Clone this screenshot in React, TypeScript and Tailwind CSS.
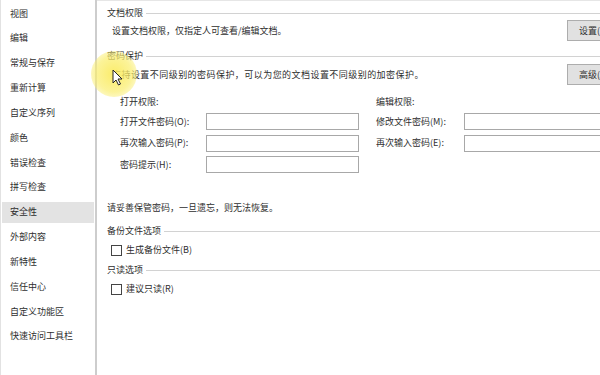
import React from "react";

const navItems = [
  "视图",
  "编辑",
  "常规与保存",
  "重新计算",
  "自定义序列",
  "颜色",
  "错误检查",
  "拼写检查",
  "安全性",
  "外部内容",
  "新特性",
  "信任中心",
  "自定义功能区",
  "快速访问工具栏",
];

function GroupTitle({ title }: { title: string }) {
  return (
    <div className="flex h-[14px] items-center gap-[3px]">
      <span className="whitespace-nowrap">{title}</span>
      <div className="h-px flex-1 bg-[#d2d2d2]" />
    </div>
  );
}

function Field({ label, wide }: { label: string; wide?: boolean }) {
  return (
    <div className="flex h-[17px] items-center">
      <span className={`${wide ? "w-[88px]" : "w-[86px]"} whitespace-nowrap`}>{label}</span>
      <div className="h-[17px] w-[153px] shrink-0 border border-[#a8a8a8] bg-white" />
    </div>
  );
}

function Check({ label }: { label: string }) {
  return (
    <div className="flex h-[14px] items-center">
      <div className="ml-[4px] h-[11px] w-[11px] border border-[#444] bg-white" />
      <span className="ml-[4px] whitespace-nowrap">{label}</span>
    </div>
  );
}

function Btn({ label }: { label: string }) {
  return (
    <div className="flex h-[21px] w-[75px] shrink-0 items-center border border-[#adadad] bg-[#e1e1e1] pl-[11px] whitespace-nowrap">
      {label}
    </div>
  );
}

export default function App() {
  return (
    <div className="relative flex h-[375px] w-[600px] overflow-hidden bg-white text-[9px] leading-[12px] text-[#2e2e2e] font-['Noto_Sans_CJK_SC','Noto_Sans',sans-serif]">
      {/* 左侧导航 */}
      <div className="w-[97px] shrink-0 border-l border-l-[#e2e2e2] border-r-2 border-r-[#cdcdcd] pt-[3px]">
        <div className="flex flex-col gap-[3.85px]">
          {navItems.map((item) => (
            <div
              key={item}
              className={`mx-[1px] flex h-[21px] items-center pl-[8px] ${
                item === "安全性" ? "bg-[#e3e3e3]" : ""
              }`}
            >
              {item}
            </div>
          ))}
        </div>
      </div>

      {/* 右侧内容 */}
      <div className="w-[560px] shrink-0 border-t border-t-[#e6e6e6] pl-[10px] pt-[5px]">
        <GroupTitle title="文档权限" />
        <div className="flex h-[21px] items-center">
          <span className="w-[460px] shrink-0 pl-[5px]">设置文档权限，仅指定人可查看/编辑文档。</span>
          <Btn label="设置(S)..." />
        </div>

        <div className="mt-[8px]">
          <GroupTitle title="密码保护" />
        </div>
        <div className="mt-[1px] flex h-[21px] items-center">
          <span className="w-[460px] shrink-0 pl-[5px] whitespace-nowrap tracking-[0.45px]">
            支持设置不同级别的密码保护，可以为您的文档设置不同级别的加密保护。
          </span>
          <Btn label="高级(A)..." />
        </div>

        <div className="mt-[10px] flex">
          <div className="ml-[13px] w-[239px] shrink-0">
            <div className="flex h-[14px] items-center">打开权限:</div>
            <div className="mt-[4px] flex flex-col gap-[4.5px]">
              <Field label="打开文件密码(O):" />
              <Field label="再次输入密码(P):" />
              <Field label="密码提示(H):" />
            </div>
          </div>
          <div className="ml-[17px] w-[241px] shrink-0">
            <div className="flex h-[14px] items-center">编辑权限:</div>
            <div className="mt-[4px] flex flex-col gap-[4.5px]">
              <Field label="修改文件密码(M):" wide />
              <Field label="再次输入密码(E):" wide />
            </div>
          </div>
        </div>

        <div className="mt-[28px] flex h-[14px] items-center">请妥善保管密码，一旦遗忘，则无法恢复。</div>

        <div className="mt-[9px]">
          <GroupTitle title="备份文件选项" />
        </div>
        <div className="mt-[5px]">
          <Check label="生成备份文件(B)" />
        </div>

        <div className="mt-[6px]">
          <GroupTitle title="只读选项" />
        </div>
        <div className="mt-[5px]">
          <Check label="建议只读(R)" />
        </div>
      </div>

      {/* 鼠标高亮 */}
      <div className="pointer-events-none absolute left-[91px] top-[51px] h-[46px] w-[46px] rounded-full bg-[radial-gradient(circle,rgba(250,234,90,0.9)_0%,rgba(250,238,110,0.7)_55%,rgba(250,240,120,0)_100%)]" />
      <svg
        className="pointer-events-none absolute left-[112px] top-[69px]"
        width="11"
        height="17"
        viewBox="0 0 11 17"
      >
        <path
          d="M1 1 L1 14 L4 11 L6.5 16 L8.5 15 L6 10 L10 10 Z"
          fill="#fff"
          stroke="#222"
          strokeWidth="1"
          strokeLinejoin="round"
        />
      </svg>
    </div>
  );
}
